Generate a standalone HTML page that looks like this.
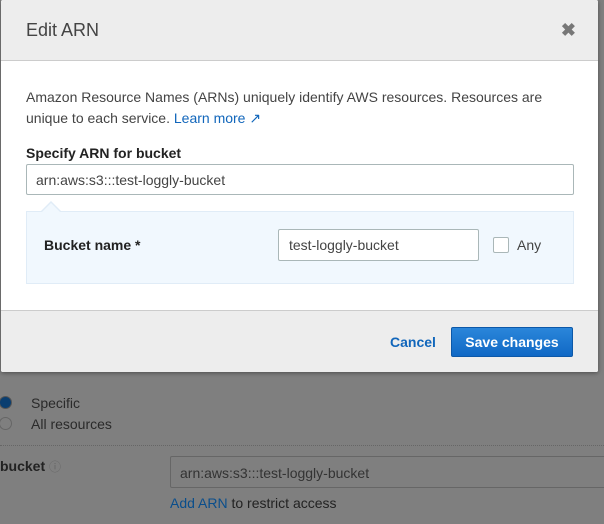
<!DOCTYPE html>
<html><head><style>
body{margin:0;width:604px;height:524px;overflow:hidden;background:#7f7f7f;font-family:"Liberation Sans",sans-serif;position:relative}
.bg{position:absolute;color:#222;font-size:14px}
.modal{position:absolute;left:1px;top:0;width:597px;height:372px;background:#fff;border-radius:2px;box-shadow:0 1px 4px rgba(0,0,0,.4);overflow:hidden}
.hd{height:60px;background:#ededed;border-bottom:1px solid #ccc;position:relative}
.hd h1{margin:0;position:absolute;left:25px;top:20px;font-size:18px;font-weight:normal;color:#444}
.x{position:absolute;right:22px;top:20px;font-size:18px;color:#777;font-weight:bold}
p{margin:0;position:absolute;left:25px;top:87px;width:540px;font-size:14px;line-height:21px;color:#444}
a{color:#1166bb;text-decoration:none}
.lbl{position:absolute;left:25px;top:145px;font-size:14px;font-weight:bold;color:#222}
.inp{position:absolute;left:25px;top:164px;width:548px;height:31px;border:1px solid #aab7b8;border-radius:2px;box-sizing:border-box;font-size:14px;color:#444;padding:7px 9px}
.box{position:absolute;left:25px;top:211px;width:548px;height:73px;background:#f1f8fe;border:1px solid #e0ecf7;box-sizing:border-box}
.tri{position:absolute;left:40px;top:201px;width:0;height:0;border-left:10px solid transparent;border-right:10px solid transparent;border-bottom:10px solid #e0ecf7}
.tri2{position:absolute;left:41px;top:203px;width:0;height:0;border-left:9px solid transparent;border-right:9px solid transparent;border-bottom:9px solid #f1f8fe}
.ft{position:absolute;left:0;top:310px;width:100%;height:62px;background:#ededed;border-top:1px solid #ccc}
.btn{position:absolute;left:450px;top:16px;width:122px;height:30px;background:linear-gradient(#2a86da,#1068c5);border:1px solid #0c58a8;border-radius:2px;color:#fff;font-weight:bold;font-size:14px;text-align:center;line-height:29px;box-sizing:border-box}
</style></head><body>
<div style="position:absolute;left:-1px;top:396px;width:13px;height:13px;border-radius:50%;border:1px solid #555;background:#0a3e70;box-sizing:border-box"></div>
<div class="bg" style="left:31px;top:395px;color:#2a2a2a">Specific</div>
<div style="position:absolute;left:-1px;top:417px;width:13px;height:13px;border-radius:50%;border:1px solid #666;box-sizing:border-box"></div>
<div class="bg" style="left:31px;top:416px;color:#2a2a2a">All resources</div>
<div style="position:absolute;left:0;top:445px;width:604px;border-top:1px dotted #666"></div>
<div class="bg" style="left:0;top:458px;font-weight:bold">bucket <span style="font-weight:normal;color:#666;font-size:12px">ⓘ</span></div>
<div style="position:absolute;left:170px;top:456px;width:440px;height:32px;border:1px solid #666;border-radius:2px;box-sizing:border-box;color:#333;font-size:14px;padding:8px 9px">arn:aws:s3:::test-loggly-bucket</div>
<div class="bg" style="left:170px;top:495px;color:#222"><span style="color:#0a4e8c">Add ARN</span> to restrict access</div>
<div class="modal">
<div class="hd"><h1>Edit ARN</h1><span class="x">✖</span></div>
<p>Amazon Resource Names (ARNs) uniquely identify AWS resources. Resources are unique to each service. <a>Learn more ↗</a></p>
<div class="lbl">Specify ARN for bucket</div>
<div class="inp">arn:aws:s3:::test-loggly-bucket</div>
<div class="box">
<div style="position:absolute;left:17px;top:25px;font-weight:bold;font-size:14px;color:#222">Bucket name *</div>
<div style="position:absolute;left:251px;top:17px;width:201px;height:32px;background:#fff;border:1px solid #aab7b8;border-radius:2px;box-sizing:border-box;font-size:14px;color:#444;padding:7px 10px">test-loggly-bucket</div>
<div style="position:absolute;left:466px;top:25px;width:14px;height:14px;border:1px solid #aab7b8;border-radius:2px;background:#fff"></div>
<div style="position:absolute;left:490px;top:25px;font-size:14px;color:#444">Any</div>
</div>
<div class="tri"></div><div class="tri2"></div>
<div class="ft"><a style="position:absolute;left:389px;top:23px;font-weight:bold;font-size:14px">Cancel</a><div class="btn">Save changes</div></div>
</div>
</body></html>
